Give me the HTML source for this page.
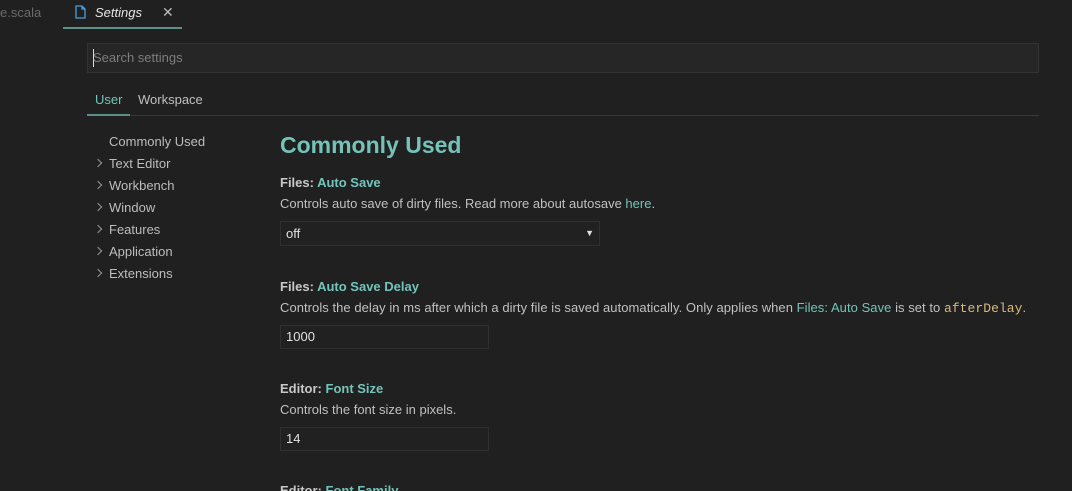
<!DOCTYPE html>
<html style="width:1072px;height:491px;overflow:hidden"><head><meta charset="utf-8"><style>
*{margin:0;padding:0;box-sizing:border-box}
body{width:1072px;height:491px;overflow:hidden;background:#202020;font-family:"Liberation Sans",sans-serif;color:#cccccc;position:relative;font-size:13px}
.a{position:absolute;white-space:nowrap}
.t{color:#74c3b9}
.b{font-weight:bold}
.box{position:absolute;border:1px solid #303030;background:#212121;color:#e0e0e0;font-size:13px;padding-left:5px;line-height:22px}
.nav{color:#bdbdbd;font-size:13px}
.chev{position:absolute;left:95px;width:6px;height:6px;border-right:1px solid #999;border-top:1px solid #999;transform:rotate(45deg)}
</style></head><body>
<div class="a" style="left:0;top:5px;color:#6a6a6a;font-size:13px">e.scala</div>
<div class="a" style="left:63px;top:27px;width:119px;height:2px;background:#5f8f8a"></div>
<svg class="a" style="left:75px;top:5px" width="11" height="14" viewBox="0 0 11 14"><path d="M1 1h6l3 3v9H1z M7 1v3h3" fill="none" stroke="#4a9fe0" stroke-width="1.3"/></svg>
<div class="a" style="left:95px;top:5px;font-style:italic;color:#e6e6e6;font-size:13px">Settings</div>
<div class="a" style="left:162px;top:4px;color:#bbb;font-size:14px">✕</div>
<div class="a" style="left:87px;top:43px;width:952px;height:30px;background:#262626;border:1px solid #333"></div>
<div class="a" style="left:93px;top:49px;width:1px;height:18px;background:#ddd"></div>
<div class="a" style="left:93px;top:50px;color:#7d7d7d;font-size:13px">Search settings</div>
<div class="a" style="left:95px;top:92px;color:#74c3b9">User</div>
<div class="a" style="left:138px;top:92px;color:#c0c0c0">Workspace</div>
<div class="a" style="left:87px;top:115px;width:952px;height:1px;background:#383838"></div>
<div class="a" style="left:87px;top:114px;width:43px;height:2px;background:#5f8f8a"></div>
<div class="a nav" style="left:109px;top:134px">Commonly Used</div>
<div class="chev" style="top:160px"></div><div class="a nav" style="left:109px;top:156px">Text Editor</div>
<div class="chev" style="top:182px"></div><div class="a nav" style="left:109px;top:178px">Workbench</div>
<div class="chev" style="top:204px"></div><div class="a nav" style="left:109px;top:200px">Window</div>
<div class="chev" style="top:226px"></div><div class="a nav" style="left:109px;top:222px">Features</div>
<div class="chev" style="top:248px"></div><div class="a nav" style="left:109px;top:244px">Application</div>
<div class="chev" style="top:270px"></div><div class="a nav" style="left:109px;top:266px">Extensions</div>
<div class="a t b" style="left:280px;top:132px;font-size:23px">Commonly Used</div>
<div class="a b" style="left:280px;top:175px;color:#c8c8c8">Files: <span class="t">Auto Save</span></div>
<div class="a" style="left:280px;top:196px;color:#c0c0c0">Controls auto save of dirty files. Read more about autosave <span class="t">here</span>.</div>
<div class="box" style="left:280px;top:221px;width:320px;height:25px;line-height:23px">off<span style="position:absolute;right:5px;font-size:9px">▼</span></div>
<div class="a b" style="left:280px;top:279px;color:#c8c8c8">Files: <span class="t">Auto Save Delay</span></div>
<div class="a" style="left:280px;top:300px;color:#c0c0c0;letter-spacing:0.05px">Controls the delay in ms after which a dirty file is saved automatically. Only applies when <span class="t">Files: Auto Save</span> is set to <span style="font-family:'Liberation Mono',monospace;color:#d7ba7d">afterDelay</span>.</div>
<div class="box" style="left:280px;top:325px;width:209px;height:24px">1000</div>
<div class="a b" style="left:280px;top:381px;color:#c8c8c8">Editor: <span class="t">Font Size</span></div>
<div class="a" style="left:280px;top:402px;color:#c0c0c0">Controls the font size in pixels.</div>
<div class="box" style="left:280px;top:427px;width:209px;height:24px">14</div>
<div class="a b" style="left:280px;top:483px;color:#c8c8c8">Editor: <span class="t">Font Family</span></div>
</body></html>
